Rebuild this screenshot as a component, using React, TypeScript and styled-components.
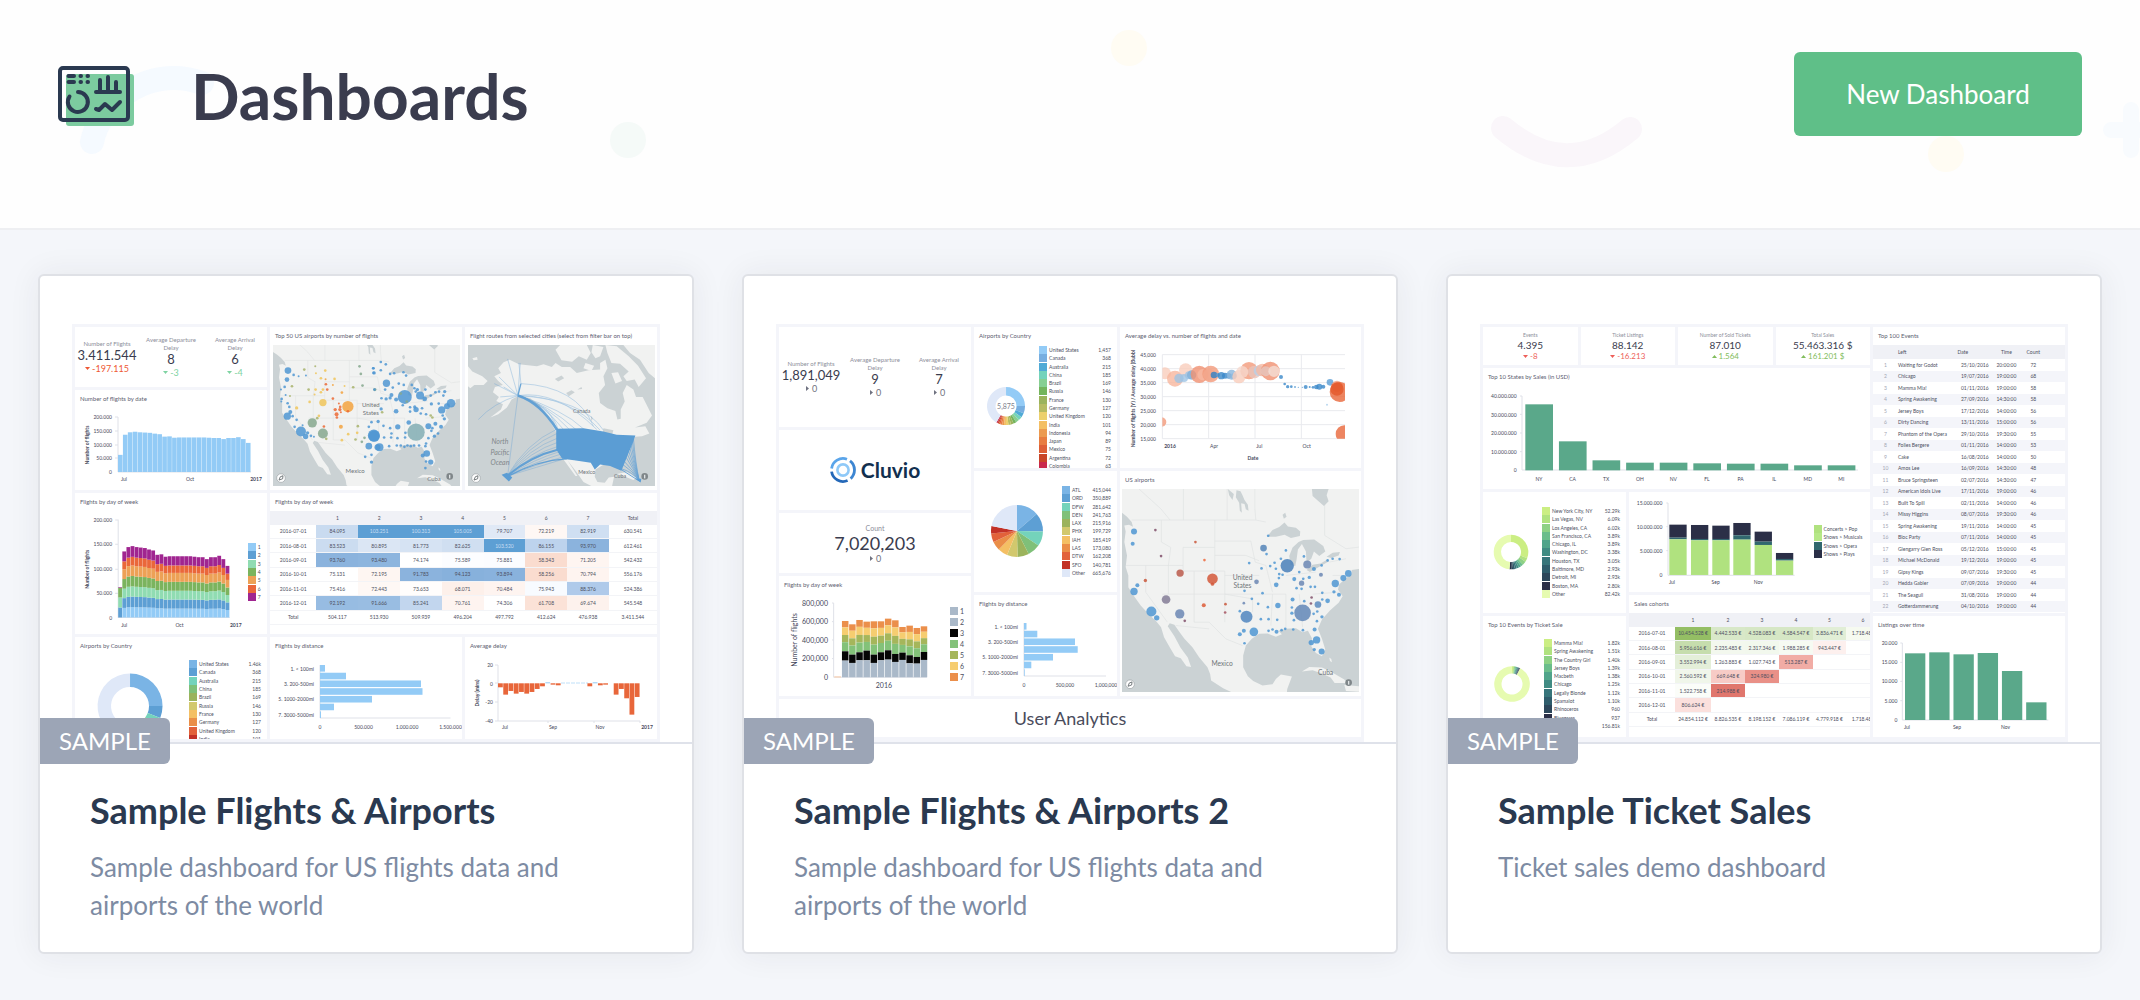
import React from "react";
import styled, { createGlobalStyle } from "styled-components";

const GlobalStyle = createGlobalStyle`
  *, *::before, *::after { box-sizing: border-box; }
  body { margin: 0; background: #f4f6fa; font-family: Lato, "Open Sans", sans-serif; color: #2a3950; }
  h1, h2, h3, p, ul { margin: 0; padding: 0; }
`;

/* ---------- page ---------- */

const Page = styled.div`
  min-height: 100vh;
  background: #f4f6fa;
`;
const Header = styled.header`
  position: relative;
  display: flex;
  align-items: center;
  padding: 52px 58px 92px;
  background: #fefefe;
  border-bottom: 2px solid #eeeff2;
  overflow: hidden;
`;
const Confetti = styled.svg`
  position: absolute;
  inset: 0;
  width: 100%;
  height: 100%;
`;
const HeaderIcon = styled.svg`
  position: relative;
  flex: none;
  width: 76px;
  height: 64px;
`;
const PageTitle = styled.h1`
  position: relative;
  flex: 1;
  margin-left: 57px;
  padding-top: 4px;
  font-size: 64px;
  line-height: 80px;
  font-weight: 700;
  color: #3a3c4e;
`;
const NewButton = styled.button`
  position: relative;
  min-width: 288px;
  height: 84px;
  padding: 0 48px;
  border: 0;
  border-radius: 6px;
  background: #5fbf88;
  color: #fff;
  font: 400 26px/38px Lato, "Open Sans", sans-serif;
  cursor: pointer;
`;
const Cards = styled.main`
  display: grid;
  grid-template-columns: repeat(3, minmax(0, 1fr));
  gap: 48px;
  padding: 44px 38px;
`;
const Card = styled.article`
  background: #fff;
  border: 2px solid #dfe1e6;
  border-radius: 6px;
  box-shadow: 0 0 32px rgba(40, 45, 60, 0.07);
`;
const Preview = styled.div`
  position: relative;
  padding: 48px 32px 0;
  border-bottom: 2px solid #dfe2ea;
`;
const Badge = styled.span`
  position: absolute;
  left: 0;
  bottom: -22px;
  padding: 0 19px;
  border-radius: 0 6px 6px 0;
  background: #9ca5b6;
  color: #fff;
  font-size: 24px;
  line-height: 46px;
`;
const CardBody = styled.div`
  padding: 44px 50px 28px;
`;
const CardTitle = styled.h2`
  font-size: 36px;
  line-height: 44px;
  font-weight: 700;
`;
const CardLink = styled.a`
  color: #2a3950;
  text-decoration: none;
`;
const CardText = styled.p`
  max-width: 480px;
  margin-top: 16px;
  font-size: 26px;
  line-height: 38px;
  color: #7d8ba3;
`;

/* ---------- miniature dashboards ---------- */

const Board = styled.div<{ $cols: string }>`
  display: grid;
  grid-template-columns: ${(p) => p.$cols};
  gap: 3px;
  height: 418px;
  padding: 3px;
  background: #f4f5fa;
  overflow: hidden;
`;
const Stack = styled.div<{ $rows?: string; $cols?: string }>`
  display: grid;
  min-width: 0;
  min-height: 0;
  gap: 3px;
  grid-template-rows: ${(p) => p.$rows ?? "auto"};
  grid-template-columns: ${(p) => p.$cols ?? "minmax(0, 1fr)"};
`;
const PanelBox = styled.section`
  display: flex;
  flex-direction: column;
  min-width: 0;
  min-height: 0;
  background: #fff;
  overflow: hidden;
`;
const PanelTitle = styled.h3`
  flex: none;
  height: 18px;
  padding-left: 5px;
  font-size: 6px;
  line-height: 17px;
  font-weight: 400;
  color: #5d6071;
  white-space: nowrap;
`;
const PanelBody = styled.div<{ $pad?: string }>`
  display: flex;
  flex: 1;
  min-height: 0;
  align-items: flex-start;
  padding: ${(p) => p.$pad ?? "0"};
`;
const Chart = styled.svg<{ $w?: string }>`
  display: block;
  flex: none;
  width: ${(p) => p.$w ?? "100%"};
  height: auto;
`;
const Label = styled.text`
  font-family: Lato, "Open Sans", sans-serif;
  fill: #45485a;
  dominant-baseline: central;
`;
const Place = styled(Label)`
  fill: #6f7478;
`;

const Kpis = styled.div`
  display: grid;
  grid-auto-flow: column;
  grid-auto-columns: 1fr;
  flex: 1;
  align-self: stretch;
  align-items: center;
`;
const Kpi = styled.div`
  text-align: center;
  white-space: nowrap;
`;
const KpiName = styled.div<{ $size?: number }>`
  font-size: ${(p) => p.$size ?? 6}px;
  line-height: ${(p) => (p.$size === 7 ? 12 : 8)}px;
  color: #8c8e9a;
  white-space: pre-line;
`;
const KpiValue = styled.div<{ $size: number }>`
  font-size: ${(p) => p.$size}px;
  line-height: ${(p) => (p.$size > 14 ? 19 : p.$size > 10 ? 15 : 12)}px;
  color: #3a3c4e;
`;
const KpiDelta = styled.div<{ $tone: string; $size?: number }>`
  display: flex;
  justify-content: center;
  align-items: center;
  gap: 2px;
  font-size: ${(p) => p.$size ?? 9}px;
  line-height: 11px;
  color: ${(p) => p.$tone};
`;

const LegendList = styled.ul<{ $h: number; $top: number }>`
  display: grid;
  grid-auto-rows: 1fr;
  flex: 1;
  min-width: 0;
  height: ${(p) => p.$h}px;
  margin-top: ${(p) => p.$top}px;
  list-style: none;
`;
const LegendItem = styled.li<{ $size: number; $right: number }>`
  display: flex;
  align-items: center;
  gap: 2px;
  padding-right: ${(p) => p.$right}px;
  font-size: ${(p) => p.$size}px;
  line-height: 8px;
  color: #4d5061;
  white-space: nowrap;
`;
const Swatch = styled.i<{ $c: string }>`
  flex: none;
  width: 8px;
  height: 8px;
  background: ${(p) => p.$c};
`;
const LegendValue = styled.span`
  margin-left: auto;
`;

const Grid = styled.table<{ $h: number; $w?: string }>`
  width: ${(p) => p.$w ?? "100%"};
  flex: none;
  height: ${(p) => p.$h}px;
  table-layout: fixed;
  border-collapse: collapse;
  font-size: 5px;
  line-height: 6px;
  color: #4d5061;
`;
const Col = styled.col<{ $w: string }>`
  width: ${(p) => p.$w};
`;
const HeadRow = styled.tr`
  background: #f0f1f6;
`;
const Row = styled.tr<{ $striped?: boolean }>`
  background: ${(p) => (p.$striped ? "#f4f5fa" : "#fff")};
`;
const Th = styled.th<{ $left?: boolean }>`
  height: 14px;
  padding: 0;
  font-weight: 400;
  text-align: ${(p) => (p.$left ? "left" : "center")};
`;
const Td = styled.td<{ $bg?: string; $fg?: string; $left?: boolean; $line?: boolean }>`
  padding: 0;
  text-align: ${(p) => (p.$left ? "left" : "center")};
  white-space: nowrap;
  background: ${(p) => p.$bg ?? "transparent"};
  color: ${(p) => p.$fg ?? "inherit"};
  border-bottom: ${(p) => (p.$line ? "1px solid #f3f4f7" : "0")};
`;
const LogoRow = styled.div`
  display: flex;
  flex: 1;
  align-items: center;
  justify-content: center;
  gap: 5px;
  font-size: 21px;
  line-height: 26px;
  font-weight: 700;
  color: #12304f;
`;
const LogoMark = styled.svg`
  width: 26px;
  height: 26px;
`;
const BigCaption = styled.div`
  flex: 1;
  font-size: 18px;
  line-height: 39px;
  text-align: center;
  color: #4a4c5c;
`;

/* ---------- shared pieces ---------- */

type Dot = [number, number, number, string?];
type LegendRow = [string, string, string?];

function Panel({ title, pad, children }: { title?: string; pad?: string; children: React.ReactNode }) {
  return (
    <PanelBox>
      {title && <PanelTitle>{title}</PanelTitle>}
      <PanelBody $pad={pad}>{children}</PanelBody>
    </PanelBox>
  );
}

function Legend({ rows, h, top, size = 5, right = 6 }: { rows: LegendRow[]; h: number; top: number; size?: number; right?: number }) {
  return (
    <LegendList $h={h} $top={top}>
      {rows.map(([color, name, value]) => (
        <LegendItem key={name} $size={size} $right={right}>
          <Swatch $c={color} />
          <span>{name}</span>
          {value && <LegendValue>{value}</LegendValue>}
        </LegendItem>
      ))}
    </LegendList>
  );
}

function Arrow({ dir }: { dir: "up" | "down" | "right" }) {
  const d = { up: "M0 4 L2.5 1 L5 4Z", down: "M0 1 L5 1 L2.5 4Z", right: "M1 0 L4 2.5 L1 5Z" }[dir];
  return (
    <svg width="5" height="5" viewBox="0 0 5 5" aria-hidden="true">
      <path d={d} fill="currentColor" />
    </svg>
  );
}

function Metric({ name, value, delta, dir, tone, size = 13, nameSize, deltaSize }: {
  name: string; value: string; delta: string; dir: "up" | "down" | "right"; tone: string;
  size?: number; nameSize?: number; deltaSize?: number;
}) {
  return (
    <Kpi>
      <KpiName $size={nameSize}>{name}</KpiName>
      <KpiValue $size={size}>{value}</KpiValue>
      <KpiDelta $tone={tone} $size={deltaSize}>
        <Arrow dir={dir} />
        {delta}
      </KpiDelta>
    </Kpi>
  );
}

function ring(cx: number, cy: number, outer: number, inner: number, from: number, to: number) {
  const pt = (r: number, t: number) =>
    `${(cx + r * Math.sin(t * 2 * Math.PI)).toFixed(2)} ${(cy - r * Math.cos(t * 2 * Math.PI)).toFixed(2)}`;
  const big = to - from > 0.5 ? 1 : 0;
  return `M${pt(outer, from)} A${outer} ${outer} 0 ${big} 1 ${pt(outer, to)} L${pt(inner, to)} A${inner} ${inner} 0 ${big} 0 ${pt(inner, from)}Z`;
}

function Slices({ cx, cy, outer, inner, parts }: { cx: number; cy: number; outer: number; inner: number; parts: [number, string][] }) {
  const total = parts.reduce((s, p) => s + p[0], 0);
  let at = 0;
  return (
    <>
      {parts.map(([n, color], i) => {
        const from = at / total;
        at += n;
        return <path key={i} d={ring(cx, cy, outer, inner, from, at / total)} fill={color} />;
      })}
    </>
  );
}

function Dots({ dots, color = "#4f96d2", opacity = 0.85 }: { dots: Dot[]; color?: string; opacity?: number }) {
  return (
    <>
      {dots.map(([x, y, r, c], i) => (
        <circle key={i} cx={x} cy={y} r={r} fill={c ?? color} opacity={opacity} />
      ))}
    </>
  );
}

/* ---------- maps ---------- */

const WATER = "#cbd2d4";
const LAND = "#f1f2f1";

function NorthAmerica() {
  return (
    <g>
      <rect x="-60" y="-20" width="900" height="700" fill={LAND} />
      <g transform="translate(-69 -541)">
        <g stroke="#e0e2e2" strokeWidth="2" fill="none">
          <path d="M98 634 H470 L500 640 M120 541 L185 600 L213 634 M253 541 V634 M384 541 V634 M467 541 V600 L470 634 M187 634 V700 L215 716 L208 770 M80 770 H252 M252 716 V792 M252 716 H347 M347 634 V787 M347 697 H455 M252 787 H377 V940 M285 787 V940 M140 770 V850 L205 940 M208 770 V856 M190 856 H560 M347 740 H440 L480 756 M377 800 H480 M377 856 L460 870 V910 M455 697 L468 760 L500 770 L520 850 M520 856 L515 950 M560 856 V955 M600 856 L610 955 M560 800 L650 790 M640 856 L720 850 M285 940 H330 L380 990 L430 1010 M230 950 L330 960 M676 541 V680 L740 720 L779 715 M690 760 L740 750 M700 800 H750" />
        </g>
        <g fill={WATER}>
          <path d="M-10 560 L69 612 L84 624 L98 640 L102 654 L90 648 L76 650 L80 668 L76 700 L84 740 L80 775 L88 800 L88 835 L100 855 L125 890 L148 915 L172 938 L186 955 L195 985 L212 1015 L228 1042 L245 1048 L262 1072 L276 1074 L266 1046 L244 1016 L226 982 L206 952 L212 943 L226 948 L240 968 L256 990 L280 1015 L300 1045 L325 1075 L333 1095 L336 1115 L372 1138 L400 1151 L440 1200 L-10 1200Z" />
          <path d="M432 1075 L432 1040 L440 1010 L458 990 L480 975 L505 974 L530 984 L548 976 L538 966 L560 960 L590 958 L610 970 L626 966 L638 988 L636 1012 L650 1032 L668 1042 L678 1022 L668 990 L656 960 L668 932 L692 905 L718 882 L730 862 L716 842 L720 826 L738 810 L757 796 L757 784 L830 772 L830 1200 L558 1200 L564 1140 L578 1103 L545 1097 L530 1110 L520 1126 L490 1130 L462 1116 L446 1102Z" />
          <path d="M503 684 L520 664 L540 655 L556 641 L566 653 L590 657 L603 668 L602 682 L575 688 L556 678 L530 684Z" />
          <path d="M574 768 L570 742 L580 716 L598 700 L612 694 L645 692 L672 712 L678 728 L660 742 L644 728 L636 750 L622 762 L620 728 L608 706 L596 722 L592 752 L588 772Z" />
          <path d="M622 784 L640 768 L664 764 L684 752 L688 758 L660 774 L632 790Z M682 744 L700 732 L722 730 L718 740 L696 748Z" />
          <path d="M638 541 H688 L682 560 L688 578 L674 592 L656 576 L640 562Z M386 541 L404 556 L400 574 L390 560Z M412 545 L424 548 L430 560 L436 574 L446 588 L448 606 L440 602 L436 586 L426 584 L428 612 L422 606 L420 582 L410 566Z M550 618 L558 612 L562 624 L554 630Z" />
        </g>
        <g fill={LAND}>
          <path d="M608 1088 L630 1074 L668 1076 L694 1088 L735 1112 L744 1122 L706 1122 L694 1106 L664 1092 L640 1084Z M735 1128 L779 1132 L800 1150 L740 1146Z M690 1046 l6 4 l2 10 l-6 -4Z" />
        </g>
      </g>
    </g>
  );
}

function MapMarks({ w, h }: { w: number; h: number }) {
  return (
    <>
      <circle cx="24" cy={h - 24} r="13" fill="#fff" stroke="#9ba1a4" strokeWidth="2" />
      <path d={`M18 ${h - 18} L22 ${h - 28} L30 ${h - 31} L29 ${h - 22}Z`} fill="none" stroke="#5c6366" strokeWidth="2.5" />
      <circle cx={w - 31} cy={h - 29} r="10" fill="#7f8689" />
      <rect x={w - 33} y={h - 34} width="4" height="11" fill="#dfe3e4" />
    </>
  );
}

const O = "#f3a33f", Y = "#f0c65b", R = "#ec6a35", G = "#86a88e", V = "#a8b36c";
const airportsWest: Dot[] = [
  [683, 183, 10], [680, 210, 7], [673, 232, 4], [662, 240, 3], [664, 268, 4], [663, 276, 3], [700, 196, 4], [715, 200, 3], [737, 198, 3], [676, 256, 3], [682, 281, 4],
  [687, 292, 4], [690, 307, 6], [681, 320, 11], [697, 320, 4], [709, 331, 4], [703, 352, 4], [722, 366, 15], [736, 381, 8], [752, 379, 4], [761, 382, 3], [727, 347, 3], [742, 370, 5],
  [695, 230, 4, V], [689, 259, 3, V], [732, 180, 4, V], [765, 170, 3, V], [745, 240, 4, V], [767, 191, 3, Y], [795, 183, 4, Y], [782, 206, 4, Y], [796, 209, 3, O], [823, 208, 4, Y],
  [797, 224, 4, R], [801, 240, 4, R], [818, 226, 3, O], [766, 240, 4, Y], [788, 240, 4, Y], [782, 248, 4, Y], [763, 255, 3, Y], [748, 277, 4, Y], [709, 295, 5, Y], [845, 249, 4, O], [853, 229, 3, Y],
  [879, 233, 4, V], [898, 170, 4, G], [902, 193, 4, G], [907, 228, 4, G], [788, 279, 11, Y], [818, 267, 4, R], [863, 291, 17, O], [836, 282, 3, R], [840, 292, 4, R], [825, 300, 5, R], [839, 300, 5, R],
  [829, 314, 6, R], [830, 324, 4, R], [842, 308, 3, R], [863, 305, 4, R], [756, 340, 14, G], [788, 372, 15, G], [776, 319, 4, Y], [771, 326, 4, V], [791, 351, 4, R], [842, 352, 6, O], [893, 350, 4, V],
  [798, 388, 4, V], [845, 392, 4, Y], [864, 374, 4, Y], [886, 390, 4, V], [891, 370, 4, Y], [905, 397, 4, G], [913, 385, 4, G], [939, 176, 4], [942, 190, 5], [944, 240, 5, G], [926, 352, 4], [941, 378, 18], [952, 413, 9],
];
const airportsEast: Dot[] = [
  [10, 176, 4], [10, 190, 4], [32, 157, 4], [32, 182, 4], [47, 164, 4], [60, 193, 4], [72, 191, 4], [100, 188, 4], [108, 198, 4], [49, 221, 11], [68, 234, 4], [86, 222, 4], [101, 226, 4], [13, 240, 4],
  [45, 240, 4], [48, 268, 5], [64, 256, 6], [60, 265, 5], [34, 266, 4], [104, 262, 21], [150, 258, 12], [142, 240, 5], [164, 268, 7], [78, 270, 6], [125, 226, 4], [133, 236, 4], [137, 246, 4], [166, 240, 4],
  [182, 258, 4], [196, 248, 4], [207, 246, 4], [224, 246, 5], [220, 258, 4], [243, 281, 13], [231, 290, 9], [215, 301, 11], [184, 283, 5], [206, 282, 4], [33, 298, 5], [78, 305, 7], [98, 287, 4], [120, 293, 4],
  [138, 300, 8], [134, 292, 5], [120, 306, 4], [156, 296, 4], [152, 312, 4], [168, 314, 4], [182, 318, 4, V], [187, 324, 4, V], [218, 318, 4], [223, 328, 5], [4, 338, 4], [24, 336, 5], [40, 349, 4], [60, 356, 4],
  [83, 352, 8], [116, 339, 7], [138, 368, 26, "#83aeb4"], [175, 350, 9], [196, 343, 6], [213, 352, 6], [187, 356, 4], [204, 372, 4], [193, 380, 5], [184, 364, 4], [12, 380, 17], [28, 413, 12], [42, 384, 4],
  [63, 384, 4], [82, 386, 4], [105, 384, 4], [64, 372, 4], [106, 370, 4], [175, 386, 4], [168, 402, 4], [57, 410, 4], [80, 408, 4], [92, 408, 4], [103, 412, 4], [112, 408, 4], [122, 410, 4], [132, 408, 4],
  [147, 408, 4], [166, 410, 4], [170, 432, 10], [158, 438, 6], [182, 458, 8], [168, 456, 4], [166, 476, 4], [4, 436, 4], [-4, 410, 10], [-15, 442, 4], [4, 458, 5], [36, 308, 4, V], [92, 252, 4, G], [110, 276, 4, G],
];

function AirportsMap() {
  return (
    <Chart viewBox="0 0 562 424" role="img" aria-label="Map of US airports">
      <g transform="translate(12.6 -26) scale(.78)"><NorthAmerica /></g>
      <g transform="translate(-638 -106)">
        <Dots dots={airportsWest} />
        <g transform="translate(930 0)"><Dots dots={airportsEast} /></g>
      </g>
      <g fontSize="18" textAnchor="middle">
        <Place x="294" y="180">United</Place>
        <Place x="294" y="203">States</Place>
        <Place x="247" y="378">Mexico</Place>
        <Place x="484" y="400">Cuba</Place>
      </g>
      <MapMarks w={562} h={424} />
    </Chart>
  );
}

const plum = "#81506b", rust = "#c9573b", slate = "#6b87b4";
const usAirports: Dot[] = [
  [105, 668, 9], [101, 705, 6], [169, 664, 4, plum], [289, 700, 4, rust], [186, 742, 4, plum], [316, 754, 4, "#ee6a3d"], [243, 793, 11, "#bb5a4b"], [340, 810, 16, "#d3583a"], [340, 826, 5, "#d3583a"], [139, 815, 5, rust],
  [105, 848, 11], [115, 829, 6], [201, 872, 13, "#847d97"], [157, 908, 15], [173, 927, 8], [242, 915, 14, slate], [257, 936, 4, plum], [314, 889, 6, "#dd5c37"], [379, 886, 4, rust], [378, 911, 4, "#a65460"],
  [442, 924, 18, "#5086c0"], [464, 969, 13], [434, 883, 4, slate], [422, 907, 4], [434, 966, 6], [422, 976, 6], [436, 1003, 4], [458, 870, 4], [477, 885, 4], [506, 895, 4], [536, 890, 8], [485, 931, 4], [508, 931, 4],
  [534, 933, 4], [508, 966, 4], [520, 962, 4], [532, 969, 6], [547, 964, 4], [558, 960, 4], [582, 962, 4], [611, 964, 4], [646, 962, 6], [610, 912, 25, "#6287b7"], [564, 771, 20, "#4a80ba"], [624, 767, 12, slate],
  [493, 718, 10, "#5585b8"], [507, 681, 4], [502, 736, 4], [450, 763, 4], [487, 779, 4], [513, 772, 4], [526, 762, 4], [530, 780, 4], [545, 750, 4], [560, 725, 4], [614, 743, 4], [472, 819, 7, slate], [531, 828, 7],
  [539, 808, 4], [540, 796, 4], [550, 798, 4], [585, 811, 6], [607, 823, 8, slate], [612, 810, 4], [630, 806, 5], [592, 838, 4], [607, 840, 4], [634, 834, 4], [647, 834, 4], [600, 790, 4], [644, 781, 6], [665, 798, 6, slate],
  [667, 770, 4], [685, 755, 4], [700, 750, 4], [721, 751, 4], [747, 794, 10], [732, 808, 9], [708, 824, 11], [704, 849, 5], [719, 858, 6], [669, 852, 4], [685, 876, 7], [656, 887, 10, "#5b8bc0"], [669, 872, 4], [637, 866, 4, plum],
  [635, 884, 4, plum], [615, 877, 4], [580, 872, 6], [578, 896, 4], [578, 913, 5], [584, 934, 4], [643, 915, 4], [654, 908, 4], [668, 924, 5], [653, 937, 4], [652, 993, 11], [636, 1001, 8], [667, 1028, 9], [645, 1022, 5], [490, 853, 4], [436, 846, 4],
];

function UsMap() {
  return (
    <Chart viewBox="0 0 710 609" role="img" aria-label="Map of US airports">
      <NorthAmerica />
      <g transform="translate(-69 -541)"><Dots dots={usAirports} /></g>
      <g fontSize="20" textAnchor="middle">
        <Place x="361" y="264">United</Place>
        <Place x="361" y="288">States</Place>
        <Place x="300" y="520">Mexico</Place>
        <Place x="610" y="549">Cuba</Place>
      </g>
      <MapMarks w={710} h={609} />
    </Chart>
  );
}

function RoutesMap() {
  const alaska = [[560, 358], [545, 340], [580, 360], [600, 362], [620, 362], [555, 350], [565, 365]];
  const pacific = [360, 372, 386, 398, 410, 418, 426, 434, 444, 450];
  const atlantic = [385, 390, 400, 410, 420, 430, 440, 455, 465, 478];
  return (
    <Chart viewBox="293 106 562 424" role="img" aria-label="Map of flight routes">
      <rect x="293" y="106" width="562" height="424" fill={WATER} />
      <g fill={LAND}>
        <path d="M384 176 L400 158 L418 150 L446 164 L500 170 L520 164 L545 172 L556 160 L575 172 L600 172 L620 190 L655 182 L690 180 L690 160 L706 150 L712 176 L700 200 L705 226 L686 250 L690 280 L712 296 L736 304 L742 330 L752 328 L752 300 L764 276 L758 250 L770 226 L790 240 L798 262 L818 262 L832 290 L846 318 L830 340 L795 354 L826 350 L838 372 L816 380 L795 382 L776 430 L752 482 L740 470 L700 466 L676 480 L674 502 L682 518 L704 520 L716 504 L732 502 L726 530 L664 530 L640 518 L618 486 L592 452 L622 500 L616 500 L580 450 L558 420 L560 372 L548 350 L530 318 L508 286 L480 266 L446 258 L424 270 L410 294 L384 314 L360 324 L392 300 L398 284 L378 274 L386 262 L368 248 L374 232 L398 226 L384 214 L372 200 L392 190Z" />
        <path d="M293 170 L306 186 L336 200 L352 214 L340 226 L312 226 L300 236 L293 230Z M556 120 L570 106 L650 106 L662 130 L650 150 L626 140 L606 156 L574 152Z M668 106 L700 112 L690 140 L676 146 L664 128Z M706 106 L740 110 L776 140 L804 168 L828 206 L806 232 L794 210 L770 214 L760 200 L776 186 L750 162 L724 160 L712 130Z M760 106 L855 106 L855 206 L836 190 L810 150 L780 130Z M646 160 L672 168 L664 184 L640 176Z M724 190 L744 188 L756 214 L736 222Z M306 146 l14 -4 l2 8 l-12 2Z M740 494 L770 488 L800 506 L790 512 L760 500Z" />
      </g>
      <g fill={WATER}>
        <path d="M588 250 l16 -8 l10 6 l-18 12Z M554 208 l20 -10 l8 8 l-18 10Z M622 240 l12 -8 l2 6Z M662 318 l6 8 l-4 10Z M700 356 l30 6 l-4 14 l-28 -4Z" />
      </g>
      <g fill="none" stroke="#5b9dd4" strokeWidth="2" opacity=".5">
        {alaska.map(([x, y], i) => <path key={i} d={`M443 258 Q${500 + i * 8} ${272 + i * 3} ${x} ${y}`} />)}
        <path d="M443 258 Q560 240 680 360 M443 258 Q600 260 690 362 M452 222 Q620 230 670 350 M443 258 Q640 270 700 362 M443 258 Q580 300 640 358" />
        <path d="M443 258 L412 148 M443 258 L450 160 M452 222 L446 160 M443 258 L386 202 M443 258 L372 222 M443 258 L390 262 M443 258 L400 232 M443 258 Q370 280 324 330 M443 258 L412 500" />
        {pacific.map((y, i) => <path key={i} d={`M410 500 Q${470 + i * 4} ${400 + i * 8} ${558 + i * 2} ${y}`} />)}
      </g>
      <g fill="none" stroke="#5b9dd4" opacity=".9">
        <path d="M443 258 Q510 280 560 360" strokeWidth="8" />
        <path d="M443 258 L452 222" strokeWidth="4" />
        <path d="M410 500 Q480 440 565 420" strokeWidth="6" />
        <path d="M410 502 Q500 452 590 448" strokeWidth="4" />
        {atlantic.map((y, i) => <path key={y} d={`M808 515 Q${796 - i} ${460 + i * 3} ${790 - i * 4} ${y}`} strokeWidth="2" />)}
        <path d="M808 515 L750 478" strokeWidth="3" />
      </g>
      <path d="M558 358 L640 356 L700 366 L740 376 L796 378 L790 396 L776 430 L754 484 L720 470 L690 465 L674 480 L662 460 L612 452 L576 448 L558 420Z M394 496 L410 490 L426 504 L416 516Z M796 508 L814 508 L812 519Z" fill="#5b9dd4" />
      <g fontSize="16" textAnchor="middle">
        <Place x="635" y="303">Canada</Place>
        <Place x="650" y="489">Mexico</Place>
        <Place x="750" y="499">Cuba</Place>
      </g>
      <g fontSize="21" fontStyle="italic" textAnchor="middle" opacity=".8">
        <Place x="389" y="396">North</Place>
        <Place x="389" y="427">Pacific</Place>
        <Place x="389" y="458">Ocean</Place>
      </g>
      <g transform="translate(293 106)"><MapMarks w={562} h={424} /></g>
    </Chart>
  );
}

/* ---------- charts ---------- */

const flightsByDate = [63, 137, 146, 148, 146, 145, 144, 141, 139, 130, 131, 126, 127, 127, 127, 127, 127, 127, 126, 125, 125, 121, 125, 125, 128, 121, 107];

function FlightsByDate() {
  const y = (v: number) => 64 - v * 0.272;
  return (
    <Chart viewBox="0 0 192 82">
      <path d="M40 9 H43 V64 H176 M40 23 H43 M40 37 H43 M40 50 H43" fill="none" stroke="#dfe1e8" />
      {flightsByDate.map((v, i) => <rect key={i} x={43 + i * 4.92} y={y(v)} width="4.6" height={64 - y(v)} fill="#93cbf6" />)}
      <g fontSize="5" textAnchor="end">
        {["200.000", "150.000", "100.000", "50.000", "0"].map((t, i) => <Label key={t} x="37" y={9 + i * 13.8}>{t}</Label>)}
      </g>
      <g fontSize="5" textAnchor="middle">
        <Label x="49" y="71">Jul</Label>
        <Label x="115" y="71">Oct</Label>
        <Label x="181" y="71" fontWeight="700">2017</Label>
        <Label transform="translate(12 37) rotate(-90)" fontWeight="700">Number of flights</Label>
      </g>
    </Chart>
  );
}

const weekColors = ["#93cbf6", "#5d9fd4", "#90dcb2", "#7bb45e", "#eda156", "#ea673a", "#a02590"];
const weekShares = [0.145, 0.148, 0.143, 0.146, 0.146, 0.122, 0.15];
const firstWeekShares = [0, 0.33, 0.33, 0.32, 0, 0, 0.02];

function WeekdayStack() {
  return (
    <Chart viewBox="0 0 172 123" $w="90%">
      <path d="M40 9 H43 V106 H154 M40 33 H43 M40 58 H43 M40 82 H43" fill="none" stroke="#dfe1e8" />
      {flightsByDate.map((v, i) => {
        let at = 106;
        return (i === 0 ? firstWeekShares : weekShares).map((share, k) => {
          const h = share * v * 0.48;
          at -= h;
          return <rect key={`${i}-${k}`} x={43 + i * 4.11} y={at} width="3.8" height={h} fill={weekColors[k]} />;
        });
      })}
      <g fontSize="5" textAnchor="end">
        {["200.000", "150.000", "100.000", "50.000", "0"].map((t, i) => <Label key={t} x="37" y={9 + i * 24.3}>{t}</Label>)}
      </g>
      <g fontSize="5" textAnchor="middle">
        <Label x="49" y="113">Jul</Label>
        <Label x="104" y="113">Oct</Label>
        <Label x="160" y="113" fontWeight="700">2017</Label>
        <Label transform="translate(12 58) rotate(-90)" fontWeight="700">Number of flights</Label>
      </g>
    </Chart>
  );
}

function Distance({ width, unit, widths, ticks }: { width: number; unit: number; widths: number[]; ticks: string[] }) {
  return (
    <Chart viewBox={`0 0 ${width} 82`}>
      <path d={`M50 10 V63 H${50 + unit * (width > 150 ? 3 : 2)}`} fill="none" stroke="#dfe1e8" />
      {widths.map((w, i) => <rect key={i} x="50" y={10 + i * 7.73} width={w} height="6.6" fill="#93cbf6" />)}
      <g fontSize="5" textAnchor="end">
        {["1. < 100mi", "3. 200-500mi", "5. 1000-2000mi", "7. 3000-5000mi"].map((t, i) => <Label key={t} x="44" y={13.5 + i * 15.4}>{t}</Label>)}
      </g>
      <g fontSize="5" textAnchor="middle">
        {ticks.map((t, i) => <Label key={t} x={50 + i * unit} y="72">{t}</Label>)}
      </g>
    </Chart>
  );
}

function AverageDelay() {
  const drop = [12, 34, 23, 31, 26, 31, 26, 17, 9, -3, 4, 6, 0, 0, 0, 0, 0, 9, -3, 6, 4, 0, 34, 17, 45, 94, 41];
  return (
    <Chart viewBox="0 0 192 82">
      <path d="M30 10 H33 V66 H175 M30 28 H33 M30 47 H33 M30 66 H33 M83 66 V68 M129 66 V68 M175 66 V68" fill="none" stroke="#dfe1e8" />
      <path d="M96 28 H123" stroke="#bfe0f9" strokeDasharray="4 1" />
      {drop.map((v, i) => (
        <rect key={i} x={33 + i * 5.26} y={v < 0 ? 27.3 : 28.3} width="4.8" height={Math.abs(v) / 3} fill={v < 0 ? "#93cbf6" : "#e8663a"} />
      ))}
      <g fontSize="5" textAnchor="end">
        {["20", "0", "-20", "-40"].map((t, i) => <Label key={t} x="28" y={10 + i * 18.6}>{t}</Label>)}
      </g>
      <g fontSize="5" textAnchor="middle">
        <Label x="40" y="72">Jul</Label>
        <Label x="88" y="72">Sep</Label>
        <Label x="135" y="72">Nov</Label>
        <Label x="182" y="72" fontWeight="700">2017</Label>
        <Label transform="translate(12 38) rotate(-90)" fontWeight="700">Delay (mins)</Label>
      </g>
    </Chart>
  );
}

function WeekdayStackLarge() {
  const tops = [933, 943, 930, 935, 934, 934, 926, 931, 951, 947, 954, 949];
  const black = [1052, 1059, 1051, 1051, 1059, 1051, 1049, 1056, 1050, 1060, 1061, 1050];
  const green = [1024, 1034, 1027, 1022, 1034, 1027, 1021, 1032, 1028, 1036, 1041, 1026];
  return (
    <Chart viewBox="27 852 513 306" $w="89%">
      <path d="M186 879 H191 V1102 H471 M186 935 H191 M186 990 H191 M186 1046 H191" fill="none" stroke="#dfe1e8" strokeWidth="3" />
      <rect x="193" y="1099" width="20" height="4" fill="#f8d3b6" />
      {tops.map((top, i) => {
        const step = (green[i] - top) / 4;
        const edges = [top, top + step * 0.85, top + step * 1.85, top + step * 2.8, green[i], black[i], 1102];
        const fills = ["#eb8f4b", "#f6cd70", "#a5b65b", "#83c279", "#050505", "#aab9c9"];
        return fills.map((f, k) => <rect key={`${i}-${k}`} x={216 + i * 21.5} y={edges[k]} width="19.5" height={edges[k + 1] - edges[k]} fill={f} />);
      })}
      <g fontSize="21" textAnchor="end">
        {["800,000", "600,000", "400,000", "200,000", "0"].map((t, i) => <Label key={t} x="174" y={879 + i * 55.5}>{t}</Label>)}
      </g>
      <g fontSize="21" textAnchor="middle">
        <Label x="342" y="1126">2016</Label>
        <Label transform="translate(72 990) rotate(-90)">Number of flights</Label>
      </g>
    </Chart>
  );
}

const bubbles: Dot[] = [
  [198, 190, 18, "#f9cdbb"], [228, 206, 24, "#f7b79d"], [260, 180, 20, "#f9cdbb"], [240, 205, 14, "#9dc3e4"], [255, 204, 12, "#9dc3e4"], [270, 196, 12, "#9dc3e4"], [278, 195, 14, "#7fb0da"], [301, 193, 26, "#f09070"],
  [312, 194, 17, "#f6b9a2"], [335, 192, 25, "#f29a7b"], [330, 194, 18, "#f3a88d"], [345, 195, 10, "#2f7fc4"], [357, 195, 6, "#5b9dd4"], [367, 197, 11, "#3b88c9"], [378, 197, 9, "#3b88c9"], [388, 197, 9, "#5b9dd4"],
  [398, 194, 15, "#8ab7dd"], [404, 199, 9, "#8ab7dd"], [420, 200, 20, "#f9cdbb"], [450, 182, 26, "#f29a7b"], [430, 186, 18, "#f6d8cd"], [466, 186, 19, "#e8c4ba"], [480, 182, 16, "#b9cfe6"], [490, 180, 19, "#f6b9a2"],
  [514, 183, 28, "#f09070"], [500, 184, 15, "#e6c8c0"], [525, 184, 17, "#f4ded6"], [546, 201, 6, "#3b88c9"], [557, 222, 4, "#3b88c9"], [566, 230, 5, "#3b88c9"], [577, 230, 4, "#3b88c9"], [588, 231, 3, "#5b9dd4"], [598, 232, 2, "#5b9dd4"],
  [610, 232, 2, "#5b9dd4"], [620, 231, 6, "#3b88c9"], [632, 231, 3, "#3b88c9"], [642, 232, 4, "#3b88c9"], [652, 231, 7, "#3b88c9"], [661, 230, 9, "#3b88c9"], [673, 230, 6, "#3b88c9"], [693, 217, 10, "#5b9dd4"],
  [714, 229, 17, "#f29a7b"], [722, 246, 30, "#e8663a"], [714, 237, 20, "#e3572a"], [188, 336, 14, "#f29a7b"], [736, 372, 26, "#e8663a"], [684, 284, 3, "#a9cdea"],
];

function Bubbles() {
  return (
    <Chart viewBox="63 105 723 369">
      <defs><clipPath id="plot"><rect x="190" y="105" width="548" height="281" /></clipPath></defs>
      <path d="M190 134 H738 M190 176 H738 M190 218 H738 M190 260 H738 M190 302 H738 M190 344 H738 M190 386 H738 M190 134 V386 M329 134 V386 M468 134 V386 M607 134 V386" fill="none" stroke="#e9eaee" strokeWidth="3" />
      <g clipPath="url(#plot)"><Dots dots={bubbles} opacity={0.8} /></g>
      <g fontSize="15" textAnchor="end">
        {["45,000", "40,000", "35,000", "30,000", "25,000", "20,000", "15,000"].map((t, i) => <Label key={t} x="171" y={134 + i * 42}>{t}</Label>)}
      </g>
      <g fontSize="15" textAnchor="middle">
        <Label x="213" y="407" fontWeight="700">2016</Label>
        <Label x="345" y="407">Apr</Label>
        <Label x="481" y="407">Jul</Label>
        <Label x="623" y="407">Oct</Label>
        <Label x="462" y="443" fontWeight="700">Date</Label>
        <Label transform="translate(101 266) rotate(-90)" fontWeight="700">Number of flights (Y) / Average delay (Bubbl</Label>
      </g>
    </Chart>
  );
}

function StateSales() {
  const tops = [283, 394, 451, 458, 458, 460, 461, 461, 466, 466];
  const names = ["NY", "CA", "TX", "OH", "NV", "FL", "PA", "IL", "MD", "MI"];
  return (
    <Chart viewBox="40 228 1161 309">
      <path d="M151 258 H157 V480 H1165 M151 313 H157 M151 369 H157 M151 425 H157" fill="none" stroke="#dfe1e8" strokeWidth="3" />
      {tops.map((t, i) => <rect key={i} x={167 + i * 100.8} y={t} width="83" height={481 - t} fill="#5aa88a" />)}
      <g fontSize="15" textAnchor="end">
        {["40.000.000", "30.000.000", "20.000.000", "10.000.000", "0"].map((t, i) => <Label key={t} x="141" y={258 + i * 55.5}>{t}</Label>)}
      </g>
      <g fontSize="15" textAnchor="middle">
        {names.map((t, i) => <Label key={t} x={208 + i * 100.8} y="508">{t}</Label>)}
      </g>
    </Chart>
  );
}

function ShowsStack() {
  const bars = [[601, 107, 146, 151], [666, 108, 150, 154], [730, 110, 150, 154], [793, 102, 139, 152], [857, 128, 158, 168], [921, 192, 210, 215]];
  return (
    <Chart viewBox="480 9 554 300" $w="76.6%">
      <path d="M592 42 H597 V259 H977 M592 113 H597 M592 185 H597" fill="none" stroke="#dfe1e8" strokeWidth="3" />
      {bars.map(([x, top, teal, green]) => (
        <g key={x}>
          <rect x={x} y={top} width="52" height={teal - top} fill="#2b2f47" />
          <rect x={x} y={teal} width="52" height={green - teal} fill="#31686f" />
          <rect x={x} y={green} width="52" height={258 - green} fill="#b0e27f" />
        </g>
      ))}
      <g fontSize="15" textAnchor="end">
        {["15.000.000", "10.000.000", "5.000.000", "0"].map((t, i) => <Label key={t} x="580" y={42 + i * 71.7}>{t}</Label>)}
      </g>
      <g fontSize="15" textAnchor="middle">
        <Label x="609" y="278">Jul</Label>
        <Label x="740" y="278">Sep</Label>
        <Label x="868" y="278">Nov</Label>
      </g>
    </Chart>
  );
}

function ListingsOverTime() {
  const tops = [1033, 1030, 1036, 1032, 1086, 1180];
  return (
    <Chart viewBox="72 975 576 309">
      <path d="M154 1002 H160 V1233 H598 M154 1060 H160 M154 1117 H160 M154 1175 H160" fill="none" stroke="#dfe1e8" strokeWidth="3" />
      {tops.map((t, i) => <rect key={i} x={168 + i * 72.7} y={t} width="61" height={1233 - t} fill="#5aa88a" />)}
      <g fontSize="15" textAnchor="end">
        {["20.000", "15.000", "10.000", "5.000", "0"].map((t, i) => <Label key={t} x="145" y={1002 + i * 57.5}>{t}</Label>)}
      </g>
      <g fontSize="15" textAnchor="middle">
        <Label x="174" y="1253">Jul</Label>
        <Label x="324" y="1253">Sep</Label>
        <Label x="470" y="1253">Nov</Label>
      </g>
    </Chart>
  );
}

/* ---------- data ---------- */

const weekLegend: LegendRow[] = weekColors.map((c, i) => [c, String(i + 1)]);
const weekLegendLarge: LegendRow[] = ["#aab9c9", "#aab9c9", "#050505", "#83c279", "#a5b65b", "#f6cd70", "#eb8f4b"].map((c, i) => [c, String(i + 1)]);

const countriesShort: LegendRow[] = [
  ["#7ab4e5", "United States", "1.46k"], ["#5d9fd4", "Canada", "368"], ["#74d3bb", "Australia", "215"], ["#7fc079", "China", "185"], ["#9bb35c", "Brazil", "169"],
  ["#d2c86d", "Russia", "146"], ["#f4bf64", "France", "130"], ["#ea8e48", "Germany", "127"], ["#e2613a", "United Kingdom", "120"], ["#c23127", "India", "101"],
];
const countries: LegendRow[] = [
  ["#93cbf6", "United States", "1,457"], ["#77aee0", "Canada", "368"], ["#50aad6", "Australia", "215"], ["#74d3bb", "China", "185"], ["#87cf92", "Brazil", "169"],
  ["#74b45c", "Russia", "146"], ["#9bb35c", "France", "130"], ["#b6bb62", "Germany", "127"], ["#ecd06d", "United Kingdom", "120"], ["#f4bf64", "India", "101"],
  ["#ec9a50", "Indonesia", "94"], ["#e87c40", "Japan", "89"], ["#de5f36", "Mexico", "75"], ["#c94527", "Argentina", "72"], ["#c9284b", "Colombia", "63"],
];
const airports: LegendRow[] = [
  ["#7ab4e5", "ATL", "415,044"], ["#5d9fd4", "ORD", "350,889"], ["#74d3bb", "DFW", "281,642"], ["#7fc079", "DEN", "241,763"], ["#9bb35c", "LAX", "215,916"], ["#d2c86d", "PHX", "199,729"],
  ["#f4bf64", "IAH", "185,419"], ["#ea8e48", "LAS", "173,080"], ["#e2613a", "DTW", "162,208"], ["#c23127", "SFO", "140,781"], ["#dfe8f8", "Other", "665,676"],
];
const ticketColors = ["#cbee83", "#b0e27f", "#8dd184", "#6bbd8b", "#50a48a", "#408b83", "#37757b", "#2f5d6c", "#2c465a", "#2b2f47", "#e6fbb0"];
const paint = (rows: [string, string][]): LegendRow[] => rows.map(([n, v], i) => [ticketColors[i], n, v]);
const cities = paint([
  ["New York City, NY", "52.29k"], ["Las Vegas, NV", "6.09k"], ["Los Angeles, CA", "6.02k"], ["San Francisco, CA", "3.89k"], ["Chicago, IL", "3.89k"], ["Washington, DC", "3.38k"],
  ["Houston, TX", "3.05k"], ["Baltimore, MD", "2.93k"], ["Detroit, MI", "2.93k"], ["Boston, MA", "2.80k"], ["Other", "82.42k"],
]);
const events = paint([
  ["Mamma Mia!", "1.82k"], ["Spring Awakening", "1.51k"], ["The Country Girl", "1.40k"], ["Jersey Boys", "1.39k"], ["Macbeth", "1.38k"], ["Chicago", "1.25k"],
  ["Legally Blonde", "1.12k"], ["Spamalot", "1.10k"], ["Rhinoceros", "960"], ["Bluegrass", "937"], ["Other", "156.81k"],
]);

const heat: [string, [string, string?, string?][]][] = [
  ["2016-07-01", [["84.095", "#c9dbf0"], ["103.251", "#5d9fd4", "#c9def2"], ["100.313", "#5d9fd4", "#c9def2"], ["105.005", "#5d9fd4", "#c9def2"], ["79.707", "#e0e9f6"], ["72.219", "#fef7f4"], ["82.919", "#cfdff2"], ["630.541"]]],
  ["2016-08-01", [["83.523", "#cbdcf0"], ["80.895", "#dbe6f4"], ["81.773", "#d6e3f3"], ["82.625", "#d0dff1"], ["103.520", "#5d9fd4", "#c9def2"], ["86.155", "#bdd3ed"], ["93.970", "#8bb3dd"], ["612.461"]]],
  ["2016-09-01", [["93.760", "#8bb3dd"], ["93.480", "#8db5de"], ["74.174"], ["75.589", "#fcfdff"], ["75.881", "#fbfcff"], ["58.343", "#fadccf"], ["71.205", "#fef5f1"], ["542.432"]]],
  ["2016-10-01", [["75.131"], ["72.195", "#fef6f2"], ["91.783", "#8bb3dd"], ["94.123", "#87b1dc"], ["93.894", "#89b2dd"], ["58.256", "#fadccf"], ["70.794", "#fef4f0"], ["556.176"]]],
  ["2016-11-01", [["75.416"], ["72.443", "#fef8f5"], ["73.653", "#fffdfc"], ["68.071", "#fdf0ea"], ["70.484", "#fef4f0"], ["75.943", "#f8fbff"], ["88.376", "#afcaea"], ["524.386"]]],
  ["2016-12-01", [["92.192", "#97bce2"], ["91.666", "#99bde2"], ["85.241", "#c2d6ee"], ["70.761", "#fef4f0"], ["74.306"], ["61.708", "#fbe2d7"], ["69.674", "#fdf2ed"], ["545.548"]]],
  ["Total", [["504.117"], ["513.930"], ["509.939"], ["496.204"], ["497.792"], ["412.624"], ["476.938"], ["3.411.544"]]],
];
const cohorts: [string, [string, string?][]][] = [
  ["2016-07-01", [["10.454.528 €", "#94be64"], ["4.442.533 €", "#d8e8c8"], ["4.528.083 €", "#d6e7c5"], ["4.584.547 €", "#d6e7c5"], ["3.836.471 €", "#e1eed6"], ["1.718.486", "#f6faf0"]]],
  ["2016-08-01", [["5.956.616 €", "#c6ddad"], ["2.235.483 €", "#f3f8ee"], ["2.317.346 €", "#f2f8ed"], ["1.988.285 €", "#f6faf2"], ["943.447 €", "#fdf0ee"], [""]]],
  ["2016-09-01", [["3.552.994 €", "#e4efd9"], ["1.263.883 €"], ["1.027.743 €"], ["513.287 €", "#f1aca5"], [""], [""]]],
  ["2016-10-01", [["2.560.592 €", "#f0f6ea"], ["669.648 €", "#f7cbc6"], ["324.980 €", "#e99087"], [""], [""], [""]]],
  ["2016-11-01", [["1.522.758 €", "#fbfdf9"], ["214.988 €", "#e0766d"], [""], [""], [""], [""]]],
  ["2016-12-01", [["806.624 €", "#fbe0dd"], [""], [""], [""], [""], [""]]],
  ["Total", [["24.854.112 €"], ["8.826.535 €"], ["8.198.152 €"], ["7.086.119 €"], ["4.779.918 €"], ["1.718.486"]]],
];
const topEvents: [string, string, string, string][] = [
  ["Waiting for Godot", "25/10/2016", "20:00:00", "72"], ["Chicago", "19/07/2016", "19:00:00", "68"], ["Mamma Mia!", "01/11/2016", "19:00:00", "58"], ["Spring Awakening", "27/09/2016", "14:30:00", "58"],
  ["Jersey Boys", "17/12/2016", "14:00:00", "56"], ["Dirty Dancing", "13/11/2016", "15:00:00", "56"], ["Phantom of the Opera", "29/10/2016", "19:30:00", "55"], ["Folies Bergere", "01/11/2016", "14:00:00", "53"],
  ["Cake", "16/08/2016", "14:00:00", "50"], ["Amos Lee", "16/09/2016", "14:30:00", "48"], ["Bruce Springsteen", "02/07/2016", "14:30:00", "47"], ["American Idols Live", "17/11/2016", "19:00:00", "46"],
  ["Built To Spill", "02/11/2016", "14:00:00", "46"], ["Missy Higgins", "08/07/2016", "19:30:00", "46"], ["Spring Awakening", "19/11/2016", "14:00:00", "45"], ["Bloc Party", "07/11/2016", "14:00:00", "45"],
  ["Glengarry Glen Ross", "05/12/2016", "15:00:00", "45"], ["Michael McDonald", "19/12/2016", "19:00:00", "45"], ["Gipsy Kings", "09/07/2016", "19:30:00", "45"], ["Hedda Gabler", "07/09/2016", "19:00:00", "44"],
  ["The Seagull", "31/08/2016", "19:00:00", "44"], ["Gotterdammerung", "04/10/2016", "19:00:00", "44"],
];

/* ---------- boards ---------- */

const RED = "#ee5733", MINT = "#7ed3a2", GREY = "#6f7280", SALE_RED = "#ee5f59", SALE_GREEN = "#82bd5c";

function CohortTable({ heads, rows, cols, width }: { heads: string[]; rows: [string, [string, string?, string?][]][]; cols: string[]; width?: string }) {
  return (
    <Grid $h={114} $w={width}>
      <colgroup>{cols.map((c, i) => <Col key={i} $w={c} />)}</colgroup>
      <thead>
        <HeadRow><Th />{heads.map((h) => <Th key={h}>{h}</Th>)}</HeadRow>
      </thead>
      <tbody>
        {rows.map(([name, cells]) => (
          <Row key={name}>
            <Td $line>{name}</Td>
            {cells.map(([v, bg, fg], i) => <Td key={i} $bg={bg} $fg={fg} $line>{v}</Td>)}
          </Row>
        ))}
      </tbody>
    </Grid>
  );
}

function FlightsBoard() {
  return (
    <Board $cols="192fr 387fr">
      <Stack $rows="60px 100px 141px 102px">
        <Panel>
          <Kpis>
            <Metric name="Number of Flights" value="3.411.544" delta="-197.115" dir="down" tone={RED} />
            <Metric name={"Average Departure\nDelay"} value="8" delta="-3" dir="down" tone={MINT} />
            <Metric name={"Average Arrival\nDelay"} value="6" delta="-4" dir="down" tone={MINT} />
          </Kpis>
        </Panel>
        <Panel title="Number of flights by date"><FlightsByDate /></Panel>
        <Panel title="Flights by day of week">
          <WeekdayStack />
          <Legend rows={weekLegend} h={58} top={32} />
        </Panel>
        <Panel title="Airports by Country">
          <Chart viewBox="0 0 114 85" $w="59.4%">
            <Slices cx={55} cy={51} outer={32.5} inner={19} parts={[[25, "#7ab4e5"], [6, "#5d9fd4"], [4, "#74d3bb"], [3, "#7fc079"], [3, "#9bb35c"], [3, "#d2c86d"], [2, "#f4bf64"], [2, "#ea8e48"], [2, "#e2613a"], [2, "#c23127"], [48, "#dfe8f8"]]} />
          </Chart>
          <Legend rows={countriesShort} h={83} top={5} />
        </Panel>
      </Stack>
      <Stack $rows="163px 141px 102px">
        <Stack $cols="1fr 1fr">
          <Panel title="Top 50 US airports by number of flights" pad="0 2px 0 3px"><AirportsMap /></Panel>
          <Panel title="Flight routes from selected cities (select from filter bar on top)" pad="0 2px 0 3px"><RoutesMap /></Panel>
        </Stack>
        <Panel title="Flights by day of week">
          <CohortTable heads={["1", "2", "3", "4", "5", "6", "7", "Total"]} rows={heat} cols={["12%", ...Array(7).fill("10.8%"), "12.4%"]} />
        </Panel>
        <Stack $cols="1fr 1fr">
          <Panel title="Flights by distance">
            <Distance width={192} unit={43.5} widths={[5, 26, 101, 102.5, 52, 14, 1]} ticks={["0", "500.000", "1.000.000", "1.500.000"]} />
          </Panel>
          <Panel title="Average delay"><AverageDelay /></Panel>
        </Stack>
      </Stack>
    </Board>
  );
}

const BoardWithFooter = styled(Board)`
  grid-template-rows: 369px 38px;
`;
const Footer = styled(PanelBox)`
  grid-column: 1 / -1;
`;

function AnalyticsBoard() {
  return (
    <BoardWithFooter $cols="192fr 143fr 241fr">
      <Stack $rows="100px 80px 60px 120px">
        <Panel>
          <Kpis>
            <Metric name="Number of Flights" value="1,891,049" delta="0" dir="right" tone={GREY} />
            <Metric name={"Average Departure\nDelay"} value="9" delta="0" dir="right" tone={GREY} />
            <Metric name={"Average Arrival\nDelay"} value="7" delta="0" dir="right" tone={GREY} />
          </Kpis>
        </Panel>
        <PanelBox>
          <LogoRow>
            <LogoMark viewBox="0 0 26 26" aria-hidden="true">
              <circle cx="13" cy="13" r="5.6" fill="none" stroke="#8fc9f8" strokeWidth="2.6" />
              <g fill="none" strokeWidth="2.8">
                <path d="M1.6 11.5 A11.5 11.5 0 0 1 17 2.2" stroke="#5aa5ea" />
                <path d="M20 3.9 A11.5 11.5 0 0 1 20.6 21.6" stroke="#3d86d2" />
                <path d="M17.6 23.5 A11.5 11.5 0 0 1 1.6 14.6" stroke="#2468b8" />
              </g>
            </LogoMark>
            Cluvio
          </LogoRow>
        </PanelBox>
        <Panel>
          <Kpis>
            <Metric name="Count" value="7,020,203" delta="0" dir="right" tone={GREY} size={18} nameSize={7} />
          </Kpis>
        </Panel>
        <Panel title="Flights by day of week">
          <WeekdayStackLarge />
          <Legend rows={weekLegendLarge} h={77} top={11} size={7} />
        </Panel>
      </Stack>
      <Stack $rows="141px 121px 101px">
        <Panel title="Airports by Country">
          <Chart viewBox="0 0 65 123" $w="45.5%">
            <Slices cx={32} cy={61} outer={19} inner={10.5} parts={[...countries.map(([c, , v]) => [Number(v!.replace(",", "")), c] as [number, string]), [2424, "#dfe8f8"]]} />
            <Label x="32" y="61" fontSize="7" textAnchor="middle" opacity=".7">5,875</Label>
          </Chart>
          <Legend rows={countries} h={124} top={1} />
        </Panel>
        <Panel>
          <Chart viewBox="0 0 88 121" $w="61.5%">
            <Slices cx={43} cy={60} outer={26} inner={0} parts={airports.map(([c, , v]) => [Number(v!.replace(",", "")), c])} />
          </Chart>
          <Legend rows={airports} h={91} top={15} />
        </Panel>
        <Panel title="Flights by distance">
          <Distance width={143} unit={41} widths={[2.5, 13.3, 51, 53.7, 29, 7.3, 0.7]} ticks={["0", "500,000", "1,000,000"]} />
        </Panel>
      </Stack>
      <Stack $rows="141px 225px">
        <Panel title="Average delay vs. number of flights and date"><Bubbles /></Panel>
        <Panel title="US airports" pad="0 2px"><UsMap /></Panel>
      </Stack>
      <Footer><BigCaption>User Analytics</BigCaption></Footer>
    </BoardWithFooter>
  );
}

function TicketBoard() {
  const kpis: [string, string, string, "up" | "down"][] = [
    ["Events", "4.395", "-8", "down"], ["Ticket Listings", "88.142", "-16.213", "down"],
    ["Number of Sold Tickets", "87.010", "1.564", "up"], ["Total Sales", "55.463.316 $", "161.201 $", "up"],
  ];
  const share = (rows: LegendRow[]): [number, string][] => rows.map(([c, , v]) => [parseFloat(v!) * (v!.endsWith("k") ? 1 : 0.001), c]);
  return (
    <Board $cols="387fr 192fr">
      <Stack $rows="38px 121px 245px">
        <Stack $cols="repeat(4, 1fr)">
          {kpis.map(([name, value, delta, dir]) => (
            <Panel key={name}>
              <Kpis>
                <Metric name={name} value={value} delta={delta} dir={dir} tone={dir === "up" ? SALE_GREEN : SALE_RED} size={10} nameSize={5} deltaSize={8} />
              </Kpis>
            </Panel>
          ))}
        </Stack>
        <Panel title="Top 10 States by Sales (in USD)"><StateSales /></Panel>
        <Stack $cols="143fr 241fr">
          <Stack $rows="121px 121px">
            <Panel>
              <Chart viewBox="0 0 59 121" $w="41.3%">
                <Slices cx={28} cy={60} outer={17.3} inner={10} parts={share(cities)} />
              </Chart>
              <Legend rows={cities} h={91} top={15} />
            </Panel>
            <Panel title="Top 10 Events by Ticket Sale">
              <Chart viewBox="0 0 61 103" $w="42.7%">
                <Slices cx={29} cy={50} outer={17.8} inner={10.5} parts={share(events)} />
              </Chart>
              <Legend rows={events} h={91} top={5} />
            </Panel>
          </Stack>
          <Stack $rows="100px 142px">
            <Panel>
              <ShowsStack />
              <Legend rows={[["#b0e27f", "Concerts > Pop"], ["#b6e888", "Shows > Musicals"], ["#31686f", "Shows > Opera"], ["#2b2f47", "Shows > Plays"]]} h={33} top={33} />
            </Panel>
            <Panel title="Sales cohorts">
              <CohortTable heads={["1", "2", "3", "4", "5", "6"]} rows={cohorts} cols={["46px", "36px", "34px", "34px", "34px", "33px", "34px"]} width="251px" />
            </Panel>
          </Stack>
        </Stack>
      </Stack>
      <Stack $rows="286px 121px">
        <Panel title="Top 100 Events">
          <Grid $h={267}>
            <colgroup>{["13%", "31%", "18%", "15%", "13%", "10%"].map((w, i) => <Col key={i} $w={w} />)}</colgroup>
            <thead>
              <HeadRow><Th /><Th $left>Left</Th><Th $left>Date</Th><Th>Time</Th><Th>Count</Th><Th /></HeadRow>
            </thead>
            <tbody>
              {topEvents.map(([name, date, time, count], i) => (
                <Row key={i} $striped={i % 2 === 1}>
                  <Td $fg="#a3a6b3">{i + 1}</Td><Td $left>{name}</Td><Td>{date}</Td><Td>{time}</Td><Td>{count}</Td><Td />
                </Row>
              ))}
            </tbody>
          </Grid>
        </Panel>
        <Panel title="Listings over time"><ListingsOverTime /></Panel>
      </Stack>
    </Board>
  );
}

/* ---------- page assembly ---------- */

const dashboards = [
  { title: "Sample Flights & Airports", text: "Sample dashboard for US flights data and airports of the world", board: <FlightsBoard /> },
  { title: "Sample Flights & Airports 2", text: "Sample dashboard for US flights data and airports of the world", board: <AnalyticsBoard /> },
  { title: "Sample Ticket Sales", text: "Ticket sales demo dashboard", board: <TicketBoard /> },
];

export default function App() {
  return (
    <Page>
      <GlobalStyle />
      <Header>
        <Confetti viewBox="0 0 2140 228" preserveAspectRatio="xMidYMin slice" aria-hidden="true">
          <g fill="none" strokeWidth="24" strokeLinecap="round">
            <path d="M92 142 C100 104 138 78 174 78 Q188 78 202 83" stroke="#f5faff" />
            <path d="M1503 128 Q1567 182 1630 129" stroke="#faf6fa" />
            <path d="M2131 110 V150 M2111 130 H2151" stroke="#f8fbfe" strokeWidth="16" />
          </g>
          <circle cx="628" cy="140" r="18" fill="#f5faf8" />
          <circle cx="1129" cy="48" r="18" fill="#fffcf3" />
          <circle cx="1946" cy="154" r="18" fill="#fffcf3" />
        </Confetti>
        <HeaderIcon viewBox="0 -4 76 64" aria-hidden="true">
          <rect x="8" y="8" width="68" height="52" rx="3" fill="#7ccb9f" />
          <g fill="none" stroke="#2a3950" strokeWidth="4" strokeLinecap="round" strokeLinejoin="round">
            <rect x="2" y="2" width="68" height="52" rx="3" />
            <path d="M10.5 10 H16 M22.5 10 H23 M29.5 10 H30 M10.5 16 H16 M22.5 16 H23 M29.5 16 H30" />
            <path d="M38 26 H62 M42 14 V26 M50 11 V26 M58 16 V26" />
            <path d="M20 26 A10 10 0 1 1 11.5 30.5" />
            <path d="M38 43 L41 44 L47 38 L54 44 L62 36" />
          </g>
        </HeaderIcon>
        <PageTitle>Dashboards</PageTitle>
        <NewButton type="button">New Dashboard</NewButton>
      </Header>
      <Cards>
        {dashboards.map((d) => (
          <Card key={d.title}>
            <Preview>
              {d.board}
              <Badge>SAMPLE</Badge>
            </Preview>
            <CardBody>
              <CardTitle><CardLink href="#">{d.title}</CardLink></CardTitle>
              <CardText>{d.text}</CardText>
            </CardBody>
          </Card>
        ))}
      </Cards>
    </Page>
  );
}
